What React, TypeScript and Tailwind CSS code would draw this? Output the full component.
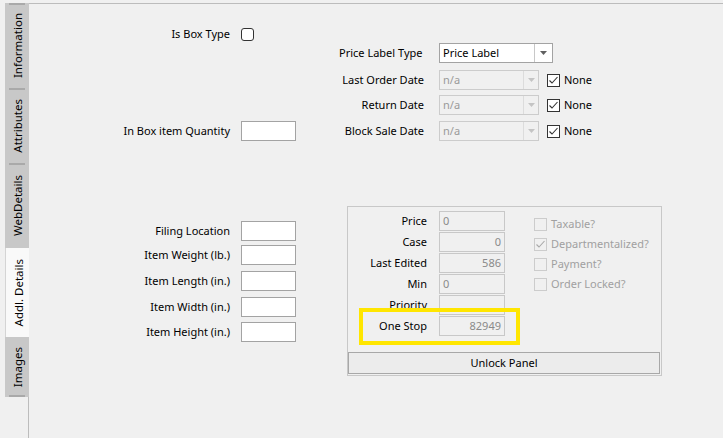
import React from "react";

const FONT = { fontFamily: '"Segoe UI", "Noto Sans", "Open Sans", sans-serif' };

function Arrow({ color }: { color: string }) {
  return (
    <svg width="7" height="4" viewBox="0 0 7 4">
      <polygon points="0,0 7,0 3.5,4" fill={color} />
    </svg>
  );
}

function Check({ color }: { color: string }) {
  return (
    <svg width="11" height="11" viewBox="0 0 11 11" className="block">
      <polyline points="1.5,5.5 4,8 9.5,2" fill="none" stroke={color} strokeWidth="1.1" />
    </svg>
  );
}

function CheckBox({ checked, disabled, rounded }: { checked?: boolean; disabled?: boolean; rounded?: boolean }) {
  return (
    <div
      className={
        "w-[13px] h-[13px] flex items-center justify-center shrink-0 border " +
        (disabled ? "border-[#cccccc] bg-[#f0f0f0] " : "border-[#333333] bg-white ") +
        (rounded ? "rounded-[3px]" : "")
      }
    >
      {checked ? <Check color={disabled ? "#a8a8a8" : "#333333"} /> : null}
    </div>
  );
}

function TextBox({ w, value, align, disabled }: { w: number; value?: string; align?: "left" | "right"; disabled?: boolean }) {
  return (
    <div
      className={
        "h-[20px] border flex items-center px-[3px] pb-[2px] shrink-0 " +
        (disabled ? "border-[#c8c8c8] bg-[#f0f0f0] text-[#8a8a8a] " : "border-[#a3a3a3] bg-white ") +
        (align === "right" ? "justify-end" : "justify-start")
      }
      style={{ width: w }}
    >
      {value}
    </div>
  );
}

function LeftRow({ label, mt, children }: { label: string; mt: string; children: React.ReactNode }) {
  return (
    <div className={"flex items-center " + mt}>
      <div className="w-[130px] ml-[71px] text-right whitespace-nowrap pb-[2px]">{label}</div>
      <div className="ml-[11px]">{children}</div>
    </div>
  );
}

function DateRow({ label, mt }: { label: string; mt: string }) {
  return (
    <div className={"flex items-center h-[20px] " + mt}>
      <div className="w-[85px] text-right whitespace-nowrap pb-[2px]">{label}</div>
      <div className="ml-[15px] w-[100px] h-[20px] border border-[#cccccc] bg-[#f0f0f0] flex">
        <div className="flex-1 flex items-center pl-[3px] pb-[2px] text-[#9a9a9a]">n/a</div>
        <div className="w-[15px] border-l border-[#dcdcdc] flex items-center justify-center">
          <Arrow color="#c4c4c4" />
        </div>
      </div>
      <div className="ml-[8px]">
        <CheckBox checked />
      </div>
      <div className="ml-[4px] pb-[2px]">None</div>
    </div>
  );
}

function Tab({ label, h, sel, topSep, bottomSep }: { label: string; h: number; sel?: boolean; topSep?: boolean; bottomSep?: boolean }) {
  return (
    <div
      className={
        "w-[24px] flex flex-col items-center shrink-0 " +
        (sel ? "bg-[#f9f9f9] border-l border-[#d4d4d4]" : "bg-[#c8c8c8]")
      }
      style={{ height: h }}
    >
      <div className={"w-[16px] h-[2px] shrink-0 " + (topSep ? "bg-[#a9a9a9]" : "")} />
      <div className="flex-1 flex items-center justify-center">
        <span className="[writing-mode:vertical-rl] rotate-180 whitespace-nowrap leading-none ml-[2px] text-[11.5px]">{label}</span>
      </div>
      <div className={"w-[16px] h-[2px] shrink-0 " + (bottomSep ? "bg-[#a9a9a9]" : "")} />
    </div>
  );
}

function GroupRow({ label, value, align, first }: { label: string; value?: string; align?: "left" | "right"; first?: boolean }) {
  return (
    <div className={"flex items-center h-[20px] " + (first ? "" : "mt-[1px]")}>
      <div className="w-[79px] text-right whitespace-nowrap pb-[2px]">{label}</div>
      <div className="ml-[12px]">
        <TextBox w={66} value={value} align={align} disabled />
      </div>
    </div>
  );
}

function CheckRow({ label, checked }: { label: string; checked?: boolean }) {
  return (
    <div className="flex items-center h-[20px]">
      <CheckBox checked={checked} disabled />
      <div className="ml-[4px] text-[#a0a0a0] whitespace-nowrap pb-[2px]">{label}</div>
    </div>
  );
}

export default function App() {
  return (
    <div className="w-[723px] h-[438px] bg-[#f0f0f0] flex overflow-hidden text-[11px] text-black leading-none" style={FONT}>
      <div className="w-[28px] pt-[3px] shrink-0 relative z-10">
        <div className="ml-[5px] flex flex-col">
          <Tab label="Information" h={85} topSep />
          <Tab label="Attributes" h={75} topSep />
          <Tab label="WebDetails" h={85} topSep />
          <Tab label="Addl. Details" h={89} sel />
          <Tab label="Images" h={60} bottomSep />
        </div>
      </div>
      <div className="flex-1 mt-[3px] border-t border-l border-[#bcbcbc] flex">
        <div className="w-[310px] shrink-0 flex flex-col">
          <LeftRow label="Is Box Type" mt="mt-[24px]">
            <CheckBox rounded />
          </LeftRow>
          <LeftRow label="In Box item Quantity" mt="mt-[80px]">
            <TextBox w={55} />
          </LeftRow>
          <LeftRow label="Filing Location" mt="mt-[80px]">
            <TextBox w={55} />
          </LeftRow>
          <LeftRow label="Item Weight (lb.)" mt="mt-[4px]">
            <TextBox w={55} />
          </LeftRow>
          <LeftRow label="Item Length (in.)" mt="mt-[6px]">
            <TextBox w={55} />
          </LeftRow>
          <LeftRow label="Item Width (in.)" mt="mt-[6px]">
            <TextBox w={55} />
          </LeftRow>
          <LeftRow label="Item Height (in.)" mt="mt-[5px]">
            <TextBox w={55} />
          </LeftRow>
        </div>
        <div className="flex flex-col">
          <div className="flex items-center h-[20px] mt-[39px]">
            <div className="w-[100px] whitespace-nowrap pb-[2px]">Price Label Type</div>
            <div className="w-[114px] h-[20px] border border-[#a3a3a3] bg-white flex">
              <div className="flex-1 flex items-center pl-[3px] pb-[2px]">Price Label</div>
              <div className="w-[18px] border-l border-[#c8c8c8] flex items-center justify-center">
                <Arrow color="#606060" />
              </div>
            </div>
          </div>
          <DateRow label="Last Order Date" mt="mt-[7px]" />
          <DateRow label="Return Date" mt="mt-[5px]" />
          <DateRow label="Block Sale Date" mt="mt-[6px]" />

          <div className="ml-[8px] mt-[65px] w-[315px] border border-[#c8c8c8] relative flex flex-col">
            <div className="flex">
              <div className="flex flex-col pt-[4px]">
                <GroupRow label="Price" value="0" align="left" first />
                <GroupRow label="Case" value="0" align="right" />
                <GroupRow label="Last Edited" value="586" align="right" />
                <GroupRow label="Min" value="0" align="left" />
                <GroupRow label="Priority" />
                <GroupRow label="One Stop" value="82949" align="right" />
              </div>
              <div className="ml-[29px] pt-[7px] flex flex-col">
                <CheckRow label="Taxable?" />
                <CheckRow label="Departmentalized?" checked />
                <CheckRow label="Payment?" />
                <CheckRow label="Order Locked?" />
              </div>
            </div>
            <div className="mt-[16px] mb-[1px] w-[312px] h-[22px] border border-[#a8a8a8] bg-[#ececec] flex items-center justify-center pb-[2px]">
              Unlock Panel
            </div>
            <div className="absolute left-[11px] top-[101px] w-[161px] h-[37px] border-4 border-[#ffe600]" />
          </div>
        </div>
      </div>
    </div>
  );
}
